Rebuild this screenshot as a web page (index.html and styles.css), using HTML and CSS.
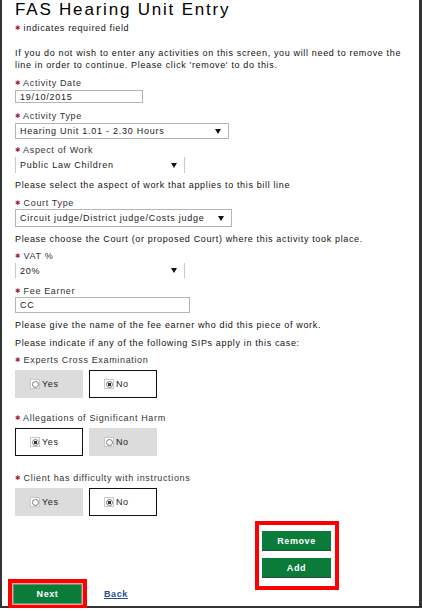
FILE: index.html
```html
<!DOCTYPE html>
<html lang="en">
<head>
  <meta charset="UTF-8">
  <title>FAS Hearing Unit Entry</title>
  <link rel="stylesheet" href="styles.css">
</head>
<body>
  <div class="frame">
    <h1>FAS Hearing Unit Entry</h1>
    <p class="req"><span class="star">&#10033;</span> indicates required field</p>
    <p class="intro">If you do not wish to enter any activities on this screen, you will need to remove the line in order to continue. Please click 'remove' to do this.</p>

    <label class="field-label lbl-date"><span class="star">&#10033;</span> Activity Date</label>
    <div class="input input-date">19/10/2015</div>

    <label class="field-label lbl-type"><span class="star">&#10033;</span> Activity Type</label>
    <div class="select select-type">Hearing Unit 1.01 - 2.30 Hours <span class="arrow"></span></div>

    <label class="field-label lbl-aspect"><span class="star">&#10033;</span> Aspect of Work</label>
    <div class="select select-open select-aspect">Public Law Children <span class="arrow"></span></div>
    <p class="help help-aspect">Please select the aspect of work that applies to this bill line</p>

    <label class="field-label lbl-court"><span class="star">&#10033;</span> Court Type</label>
    <div class="select select-court">Circuit judge/District judge/Costs judge <span class="arrow"></span></div>
    <p class="help help-court">Please choose the Court (or proposed Court) where this activity took place.</p>

    <label class="field-label lbl-vat"><span class="star">&#10033;</span> VAT %</label>
    <div class="select select-open select-vat">20% <span class="arrow"></span></div>

    <label class="field-label lbl-fee"><span class="star">&#10033;</span> Fee Earner</label>
    <div class="input input-fee">CC</div>
    <p class="help help-fee">Please give the name of the fee earner who did this piece of work.</p>
    <p class="help help-sip">Please indicate if any of the following SIPs apply in this case:</p>

    <label class="field-label lbl-sip1"><span class="star">&#10033;</span> Experts Cross Examination</label>
    <div class="choices">
      <div class="choice"><span class="radio"></span>Yes</div>
      <div class="choice selected"><span class="radio on"></span>No</div>
    </div>

    <label class="field-label lbl-sip2"><span class="star">&#10033;</span> Allegations of Significant Harm</label>
    <div class="choices">
      <div class="choice selected"><span class="radio on"></span>Yes</div>
      <div class="choice"><span class="radio"></span>No</div>
    </div>

    <label class="field-label lbl-sip3"><span class="star">&#10033;</span> Client has difficulty with instructions</label>
    <div class="choices">
      <div class="choice"><span class="radio"></span>Yes</div>
      <div class="choice selected"><span class="radio on"></span>No</div>
    </div>

    <div class="line-actions">
      <div class="highlight stack">
        <button class="btn">Remove</button>
        <button class="btn">Add</button>
      </div>
    </div>

    <div class="nav">
      <div class="highlight next-wrap">
        <button class="btn btn-next">Next</button>
      </div>
      <a href="#" class="back">Back</a>
    </div>
  </div>
</body>
</html>
```

FILE: styles.css
```css
body {
  margin: 0;
  background: #fff;
  font-family: "Liberation Sans", Arial, sans-serif;
  font-size: 9px;
  color: #111;
}
.frame {
  box-sizing: border-box;
  width: 422px;
  height: 608px;
  padding-left: 13px;
  border-left: 2px solid #333;
  border-right: 3px solid #333;
  border-bottom: 2px solid #333;
  box-shadow: 0 2px 0 #ccc;
}
h1 {
  margin: 0;
  font-size: 17px;
  line-height: 19px;
  font-weight: normal;
  letter-spacing: 1.8px;
  color: #000;
}
p {
  margin: 0;
  line-height: 12px;
  letter-spacing: 0.65px;
}
.star {
  color: #b0182f;
  font-family: "DejaVu Sans", sans-serif;
  font-size: 6.5px;
  letter-spacing: 0;
  vertical-align: 1px;
}
.req {
  margin-top: 3px;
}
.intro {
  margin-top: 13px;
  width: 404px;
}
.field-label {
  display: block;
  line-height: 12px;
  color: #333;
  letter-spacing: 0.65px;
}
.help {
  margin-top: 6px;
}
.lbl-date { margin-top: 6px; }
.lbl-type { margin-top: 7px; }
.lbl-aspect { margin-top: 5px; }
.lbl-court { margin-top: 6px; }
.lbl-vat { margin-top: 5px; }
.lbl-fee { margin-top: 7px; }
.lbl-sip1 { margin-top: 5px; }
.lbl-sip2 { margin-top: 14px; }
.lbl-sip3 { margin-top: 16px; }

.input, .select {
  box-sizing: border-box;
  border: 1px solid #b5b5b5;
  padding-left: 4px;
  color: #222;
  letter-spacing: 0.75px;
  display: flex;
  align-items: center;
}
.input-date {
  margin-top: 1px;
  width: 128px;
  height: 13px;
}
.input-fee {
  width: 175px;
  height: 16px;
}
.select {
  justify-content: space-between;
  padding-right: 7px;
}
.select-type {
  margin-top: 1px;
  width: 214px;
  height: 16px;
}
.select-aspect {
  margin-top: 1px;
  width: 170px;
  height: 16px;
}
.select-court {
  width: 217px;
  height: 18px;
}
.select-vat {
  margin-top: 1px;
  width: 170px;
  height: 15px;
}
.select-open {
  border-top: none;
  border-bottom: none;
  border-color: #c8c8c8;
}
.arrow {
  width: 0;
  height: 0;
  border-left: 3px solid transparent;
  border-right: 3px solid transparent;
  border-top: 5px solid #111;
}

.choices {
  display: flex;
  gap: 6px;
  margin-top: 4px;
}
.choice {
  box-sizing: border-box;
  width: 68px;
  height: 28px;
  background: #dcdcdd;
  display: flex;
  align-items: center;
  padding-left: 15px;
  color: #222;
  letter-spacing: 0.6px;
}
.choice.selected {
  background: #fff;
  border: 1px solid #111;
  padding-left: 14px;
}
.radio {
  box-sizing: border-box;
  width: 10px;
  height: 10px;
  margin-right: 2px;
  background: #fff;
  border: 1px solid #c8c8c8;
  display: flex;
  align-items: center;
  justify-content: center;
}
.radio::after {
  content: "";
  box-sizing: border-box;
  width: 7px;
  height: 7px;
  border-radius: 50%;
  border: 1px solid #777;
}
.radio.on::after {
  background: radial-gradient(circle, #333 45%, #fff 55%);
}

.line-actions {
  display: flex;
  margin-top: 5px;
  padding-left: 240px;
}
.highlight {
  border: 4px solid #f00;
  background: #fff;
}
.stack {
  display: flex;
  flex-direction: column;
  gap: 7px;
  width: 84px;
  box-sizing: border-box;
  padding: 6px 3px 8px;
}
.btn {
  display: block;
  width: 69px;
  height: 20px;
  border: none;
  border-bottom: 1px solid #2d4b38;
  background: #0b7b3a;
  color: #fff;
  font-family: "Liberation Sans", Arial, sans-serif;
  font-size: 9px;
  font-weight: bold;
  letter-spacing: 0.6px;
  padding: 0;
}
.nav {
  display: flex;
  align-items: center;
  margin-top: -11px;
  margin-left: -7px;
}
.next-wrap {
  padding: 1px;
  background: #e8a0a0;
}
.btn-next {
  border: 1px solid #5f9c74;
  width: 69px;
  height: 20px;
}
.back {
  margin-left: 17px;
  color: #1f4f9a;
  font-weight: bold;
  letter-spacing: 0.6px;
}
```
